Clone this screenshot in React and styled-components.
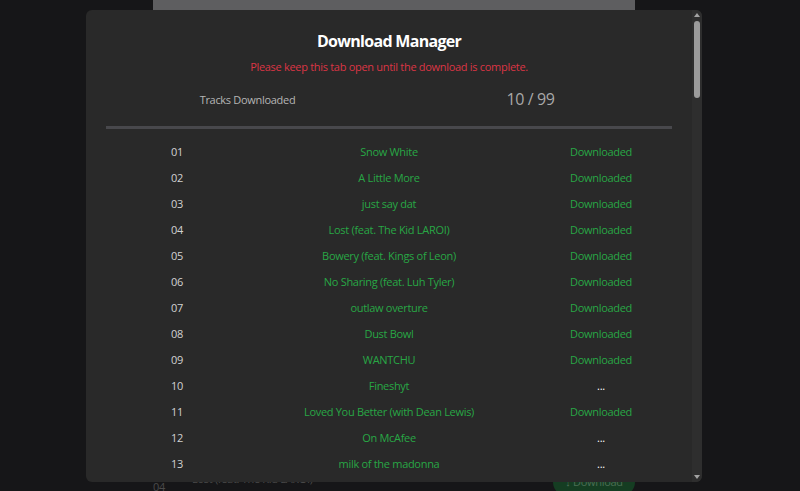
import React from 'react'
import styled, { createGlobalStyle } from 'styled-components'

const GlobalStyle = createGlobalStyle`
  html, body {
    margin: 0;
    padding: 0;
    height: 100%;
    background: #161618;
    font-family: "Open Sans", "Liberation Sans", sans-serif;
    overflow: hidden;
  }
  #root {
    height: 100%;
  }
`

const tracks = [
  { num: '01', title: 'Snow White', done: true },
  { num: '02', title: 'A Little More', done: true },
  { num: '03', title: 'just say dat', done: true },
  { num: '04', title: 'Lost (feat. The Kid LAROI)', done: true },
  { num: '05', title: 'Bowery (feat. Kings of Leon)', done: true },
  { num: '06', title: 'No Sharing (feat. Luh Tyler)', done: true },
  { num: '07', title: 'outlaw overture', done: true },
  { num: '08', title: 'Dust Bowl', done: true },
  { num: '09', title: 'WANTCHU', done: true },
  { num: '10', title: 'Fineshyt', done: false },
  { num: '11', title: 'Loved You Better (with Dean Lewis)', done: true },
  { num: '12', title: 'On McAfee', done: false },
  { num: '13', title: 'milk of the madonna', done: false },
]

function App() {
  return (
    <>
      <GlobalStyle />
      <Page>
        <Backdrop>
          <TopStrip />
          <BackSpacer />
          <BackRow>
            <BackNum>04</BackNum>
            <BackTitle>Lost (feat. The Kid LAROI)</BackTitle>
            <BackButton>↓ Download</BackButton>
          </BackRow>
        </Backdrop>
        <Overlay>
          <Modal>
            <Content>
              <Title>Download Manager</Title>
              <Warning>Please keep this tab open until the download is complete.</Warning>
              <Stats>
                <StatLabel>Tracks Downloaded</StatLabel>
                <StatValue>10 / 99</StatValue>
              </Stats>
              <Divider />
              <TrackList>
                {tracks.map((t) => (
                  <TrackRow key={t.num}>
                    <TrackNum>{t.num}</TrackNum>
                    <TrackTitle>{t.title}</TrackTitle>
                    <TrackStatus $done={t.done}>{t.done ? 'Downloaded' : '...'}</TrackStatus>
                  </TrackRow>
                ))}
              </TrackList>
            </Content>
            <ScrollBar>
              <ScrollArrow viewBox="0 0 10 10">
                <path d="M2 7 L5 3 L8 7 Z" fill="#a3a3a3" />
              </ScrollArrow>
              <ScrollTrack>
                <ScrollThumb />
              </ScrollTrack>
              <ScrollArrow viewBox="0 0 10 10">
                <path d="M2 3 L5 7 L8 3 Z" fill="#a3a3a3" />
              </ScrollArrow>
            </ScrollBar>
          </Modal>
        </Overlay>
      </Page>
    </>
  )
}

export default App

const Page = styled.div`
  position: relative;
  height: 100%;
  background: #161618;
  overflow: hidden;
`

const Backdrop = styled.div`
  display: flex;
  flex-direction: column;
  height: 100%;
  width: 482px;
  margin-left: 153px;
`

const TopStrip = styled.div`
  height: 10px;
  background: #5e5e60;
`

const BackSpacer = styled.div`
  flex: 1;
`

const BackRow = styled.div`
  display: flex;
  align-items: flex-start;
  height: 14px;
  color: #4a4a4a;
  font-size: 11px;
  letter-spacing: -0.3px;
`

const BackNum = styled.div`
  width: 39px;
  padding-top: 2px;
`

const BackTitle = styled.div`
  flex: 1;
  margin-top: -6px;
`

const BackButton = styled.div`
  width: 82px;
  height: 28px;
  margin-top: -9px;
  border-radius: 14px;
  background: #153d22;
  color: #4c6d55;
  text-align: center;
  line-height: 28px;
  font-size: 11px;
`

const Overlay = styled.div`
  position: absolute;
  inset: 0;
  display: flex;
  padding: 10px 98px 9px 86px;
`

const Modal = styled.div`
  flex: 1;
  display: flex;
  background: #292929;
  border-radius: 6px;
  overflow: hidden;
`

const Content = styled.div`
  flex: 1;
  padding: 18px 20px 0;
  overflow: hidden;
`

const ScrollBar = styled.div`
  width: 10px;
  display: flex;
  flex-direction: column;
  background: #2e2e2e;
`

const ScrollArrow = styled.svg`
  width: 10px;
  height: 10px;
  flex: none;
`

const ScrollTrack = styled.div`
  flex: 1;
  padding: 1px 2px;
`

const ScrollThumb = styled.div`
  height: 77px;
  border-radius: 3px;
  background: #9b9b9b;
`

const Title = styled.h2`
  margin: 0;
  text-align: center;
  color: #ffffff;
  font-size: 16px;
  letter-spacing: -0.7px;
  font-weight: 700;
  line-height: 26px;
`

const Warning = styled.p`
  margin: 4px 0 0;
  text-align: center;
  color: #dc3545;
  font-size: 11px;
  letter-spacing: -0.3px;
  line-height: 18px;
`

const Stats = styled.div`
  display: grid;
  grid-template-columns: 1fr 1fr;
  align-items: center;
  height: 30px;
  margin-top: 8px;
  text-align: center;
`

const StatLabel = styled.div`
  color: #b5b5b5;
  font-size: 11px;
  letter-spacing: -0.3px;
`

const StatValue = styled.div`
  color: #a8a8a8;
  font-size: 16px;
  letter-spacing: -0.4px;
`

const Divider = styled.div`
  height: 3px;
  margin-top: 12px;
  background: #48484c;
`

const TrackList = styled.div`
  display: flex;
  flex-direction: column;
  margin-top: 9px;
`

const TrackRow = styled.div`
  display: grid;
  grid-template-columns: 142px 1fr 142px;
  align-items: center;
  height: 26px;
  text-align: center;
  font-size: 11px;
  letter-spacing: -0.3px;
`

const TrackNum = styled.div`
  color: #d2d2d2;
`

const TrackTitle = styled.div`
  color: #28a745;
`

const TrackStatus = styled.div`
  color: ${(p) => (p.$done ? '#28a745' : '#ffffff')};
`
